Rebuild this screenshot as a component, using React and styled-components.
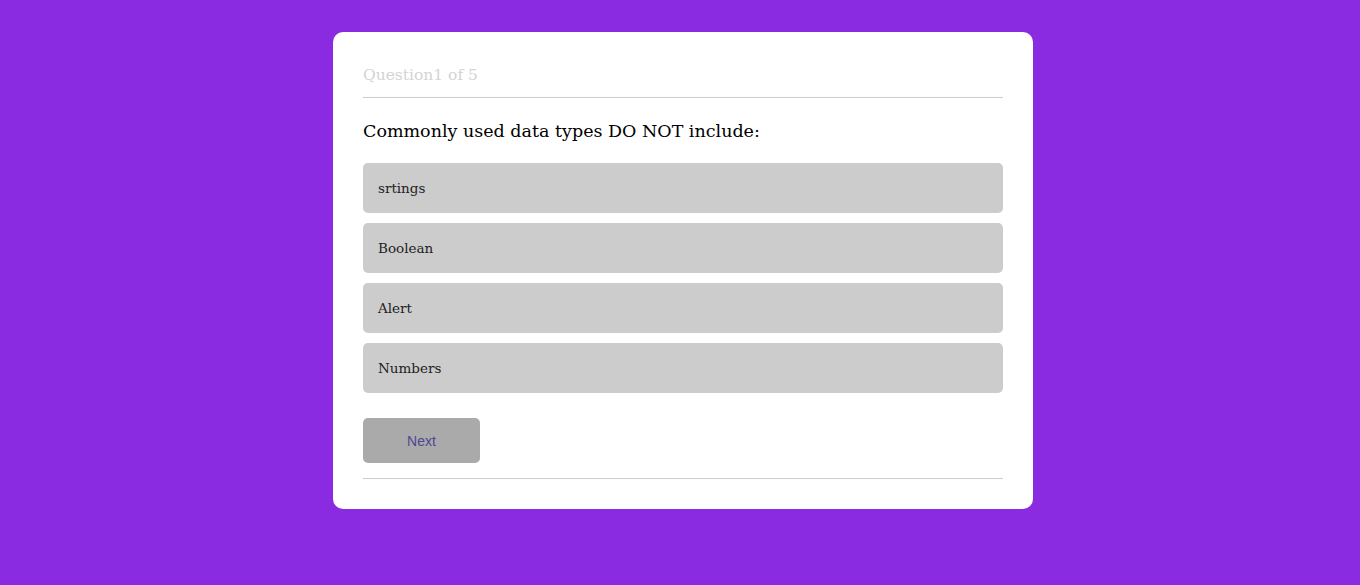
import React from "react";
import styled, { createGlobalStyle } from "styled-components";

const Global = createGlobalStyle`
  html, body { margin: 0; padding: 0; }
  body { background: #8a2be2; font-family: "DejaVu Serif", Georgia, serif; }
`;

const Page = styled.div`
  min-height: 585px;
  display: flex;
  justify-content: center;
  align-items: flex-start;
  padding: 32px 0 0 6px;
  box-sizing: border-box;
`;

const Card = styled.div`
  width: 700px;
  box-sizing: border-box;
  background: #fff;
  border-radius: 10px;
  padding: 30px;
`;

const Header = styled.div`
  height: 36px;
  box-sizing: border-box;
  border-bottom: 1px solid #cccccc;
  color: #d3d3d3;
  font-size: 15.5px;
  padding-top: 4px;
`;

const Question = styled.h2`
  margin: 0;
  padding-top: 23px;
  height: 65px;
  box-sizing: border-box;
  font-size: 17.5px;
  font-weight: normal;
  color: #000;
`;

const Options = styled.div`
  display: flex;
  flex-direction: column;
  gap: 10px;
`;

const Option = styled.button`
  height: 50px;
  background: #cccccc;
  border: none;
  border-radius: 5px;
  text-align: left;
  padding: 0 15px;
  font-family: "DejaVu Serif", Georgia, serif;
  font-size: 13.5px;
  color: #222;
`;

const Footer = styled.div`
  padding: 25px 0 15px;
  border-bottom: 1px solid #cccccc;
`;

const Next = styled.button`
  width: 117px;
  height: 45px;
  background: #aaaaaa;
  border: none;
  border-radius: 5px;
  color: #4f4694;
  font-family: "Liberation Sans", Arial, sans-serif;
  font-size: 14px;
  display: block;
`;

const options = ["srtings", "Boolean", "Alert", "Numbers"];

export default function App() {
  return (
    <>
      <Global />
      <Page>
        <Card>
          <Header>Question1 of 5</Header>
          <Question>Commonly used data types DO NOT include:</Question>
          <Options>
            {options.map((o) => (
              <Option key={o}>{o}</Option>
            ))}
          </Options>
          <Footer>
            <Next>Next</Next>
          </Footer>
        </Card>
      </Page>
    </>
  );
}
